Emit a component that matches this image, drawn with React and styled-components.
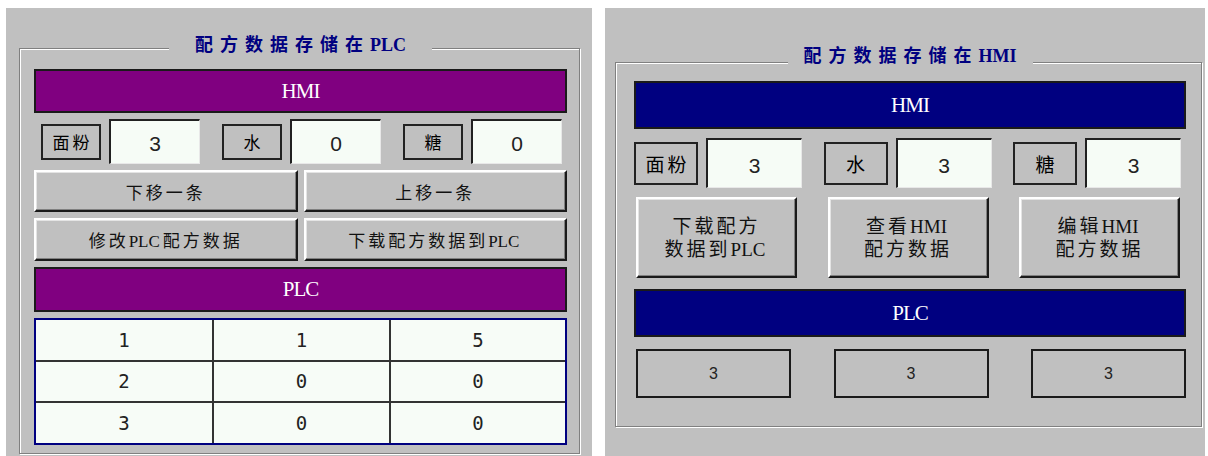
import React from 'react'
import styled, { createGlobalStyle } from 'styled-components'

const GlobalStyles = createGlobalStyle`
  html, body {
    margin: 0;
    padding: 0;
    background: #fff;
  }
  body {
    font-family: "Liberation Serif", "Noto Sans CJK SC", serif;
  }
`

const Page = styled.div`
  display: flex;
  gap: 13px;
  padding: 8px 0 0 6px;
  height: 448px;
`

const Panel = styled.div`
  width: ${({ w }) => w}px;
  height: 448px;
  box-sizing: border-box;
  background: #c0c0c0;
  padding: ${({ pad }) => pad};
`

const Frame = styled.fieldset`
  margin: 0;
  border: 1px solid #808080;
  box-shadow: inset 1px 1px 0 #fff, 1px 1px 0 #fff;
  padding: ${({ pad }) => pad};
  display: flex;
  flex-direction: column;
  min-width: 0;
`

const Title = styled.legend`
  margin: 0 auto;
  padding: 0 ${({ side }) => side}px ${({ below }) => below}px;
  background: #c0c0c0;
  line-height: 20px;
  font-size: 18px;
  font-weight: bold;
  color: #000080;
  letter-spacing: 7px;
  white-space: nowrap;

  span {
    letter-spacing: 0;
  }
`

const Latin = styled.span`
  letter-spacing: 0;
  margin-right: 3px;
`

const Stack = styled.div`
  display: flex;
  flex-direction: column;
  gap: ${({ gap }) => gap};
`

const Bar = styled.div`
  height: ${({ h }) => h}px;
  margin-top: ${({ top = 0 }) => top}px;
  box-sizing: border-box;
  border: 2px solid #1a1a1a;
  background: ${({ tone }) => tone};
  color: #fff;
  display: flex;
  align-items: center;
  justify-content: center;
  font-family: "Liberation Serif", serif;
  font-size: 21px;
  letter-spacing: -1px;
`

const FieldRow = styled.div`
  display: flex;
  align-items: center;
  justify-content: space-between;
  padding: ${({ pad }) => pad};
`

const Field = styled.div`
  display: flex;
  align-items: center;
  gap: 8px;
`

const Tag = styled.div`
  width: ${({ w }) => w}px;
  height: ${({ h }) => h}px;
  box-sizing: border-box;
  border: 2px solid #222;
  display: flex;
  align-items: center;
  justify-content: center;
  font-family: "Noto Sans CJK SC", sans-serif;
  font-size: ${({ fs }) => fs}px;
  letter-spacing: 3px;
  padding-left: 3px;
  color: #000;
`

const Entry = styled.div`
  width: ${({ w }) => w}px;
  height: ${({ h }) => h}px;
  box-sizing: border-box;
  background: #f6fcf6;
  border-style: solid;
  border-width: 2px 1px 1px 2px;
  border-color: #202020 #e8e8e8 #e8e8e8 #202020;
  display: flex;
  align-items: center;
  justify-content: center;
  font-family: "Liberation Sans", sans-serif;
  font-size: 21px;
  color: #222;
  padding-top: 4px;
`

const ButtonGrid = styled.div`
  display: grid;
  grid-template-columns: 1fr 1fr;
  column-gap: 6px;
  row-gap: 6px;
`

const ButtonRow = styled.div`
  display: flex;
  justify-content: space-between;
  padding: 0 6px 0 2px;
`

const Button = styled.button`
  height: ${({ h }) => h}px;
  width: ${({ w }) => (w ? `${w}px` : 'auto')};
  box-sizing: border-box;
  margin: 0;
  padding: 0;
  background: #c0c0c0;
  border-style: solid;
  border-width: 2px;
  border-color: #ffffff #1a1a1a #1a1a1a #ffffff;
  box-shadow: inset -1px -1px 0 #808080, inset 1px 1px 0 #e4e4e4;
  font-family: "Liberation Serif", "Noto Sans CJK SC", serif;
  font-size: ${({ fs }) => fs}px;
  line-height: ${({ lh }) => lh}px;
  letter-spacing: 3px;
  color: #111;
  text-align: center;
`

const Table = styled.div`
  display: grid;
  grid-template-columns: 178px 177px 1fr;
  height: 127px;
  box-sizing: border-box;
  border: 2px solid #000080;
  background: #f7fcf7;
`

const Cell = styled.div`
  display: flex;
  align-items: center;
  justify-content: center;
  font-family: "DejaVu Sans Mono", monospace;
  font-size: 19px;
  color: #222;
  border-right: ${({ last }) => (last ? 'none' : '2px solid #333')};
  border-bottom: ${({ bottom }) => (bottom ? 'none' : '2px solid #333')};
`

const ValueRow = styled.div`
  display: flex;
  justify-content: space-between;
  margin-top: 3px;
  padding-left: 2px;
`

const Value = styled.div`
  width: 155px;
  height: 49px;
  box-sizing: border-box;
  border: 2px solid #1a1a1a;
  display: flex;
  align-items: center;
  justify-content: center;
  font-family: "Liberation Sans", sans-serif;
  font-size: 16px;
  color: #222;
`

const plcRows = [
  [1, 1, 5],
  [2, 0, 0],
  [3, 0, 0],
]

const fields = [
  { label: '面粉' },
  { label: '水' },
  { label: '糖' },
]

const App = () => {
  const leftValues = ['3', '0', '0']
  const rightValues = ['3', '3', '3']

  return (
    <>
      <GlobalStyles />
      <Page>
        <Panel w={586} pad="27px 12px 0 13px">
          <Frame pad="8px 12px 8px 14px">
            <Title side={26} below={6}>
              配方数据存储在<span>PLC</span>
            </Title>
            <Stack gap="6px">
              <Bar h={44} tone="#800080">HMI</Bar>
              <FieldRow pad="0 5px 0 7px">
                {fields.map((f, i) => (
                  <Field key={f.label}>
                    <Tag w={60} h={36} fs={17}>{f.label}</Tag>
                    <Entry w={91} h={45}>{leftValues[i]}</Entry>
                  </Field>
                ))}
              </FieldRow>
              <ButtonGrid>
                <Button h={42} fs={17}>下移一条</Button>
                <Button h={42} fs={17}>上移一条</Button>
                <Button h={43} fs={17}>修改<Latin>PLC</Latin>配方数据</Button>
                <Button h={43} fs={17}>下载配方数据到<Latin>PLC</Latin></Button>
              </ButtonGrid>
              <Bar h={45} tone="#800080">PLC</Bar>
              <Table>
                {plcRows.map((row, r) =>
                  row.map((v, c) => (
                    <Cell key={`${r}-${c}`} last={c === 2} bottom={r === 2}>
                      {v}
                    </Cell>
                  ))
                )}
              </Table>
            </Stack>
          </Frame>
        </Panel>

        <Panel w={600} pad="38px 3px 0 10px">
          <Frame pad="3px 15px 28px 18px">
            <Title side={16} below={12}>
              配方数据存储在<span>HMI</span>
            </Title>
            <Stack gap="9px">
              <Bar h={48} tone="#000080">HMI</Bar>
              <FieldRow pad="0 5px 0 0">
                {fields.map((f, i) => (
                  <Field key={f.label}>
                    <Tag w={64} h={43} fs={19}>{f.label}</Tag>
                    <Entry w={96} h={50}>{rightValues[i]}</Entry>
                  </Field>
                ))}
              </FieldRow>
              <ButtonRow>
                <Button w={161} h={81} fs={19} lh={23}>下载配方<br />数据到<Latin>PLC</Latin></Button>
                <Button w={161} h={81} fs={19} lh={23}>查看<Latin>HMI</Latin><br />配方数据</Button>
                <Button w={161} h={81} fs={19} lh={23}>编辑<Latin>HMI</Latin><br />配方数据</Button>
              </ButtonRow>
              <Bar h={48} top={2} tone="#000080">PLC</Bar>
              <ValueRow>
                {rightValues.map((v, i) => (
                  <Value key={i}>{v}</Value>
                ))}
              </ValueRow>
            </Stack>
          </Frame>
        </Panel>
      </Page>
    </>
  )
}

export default App
